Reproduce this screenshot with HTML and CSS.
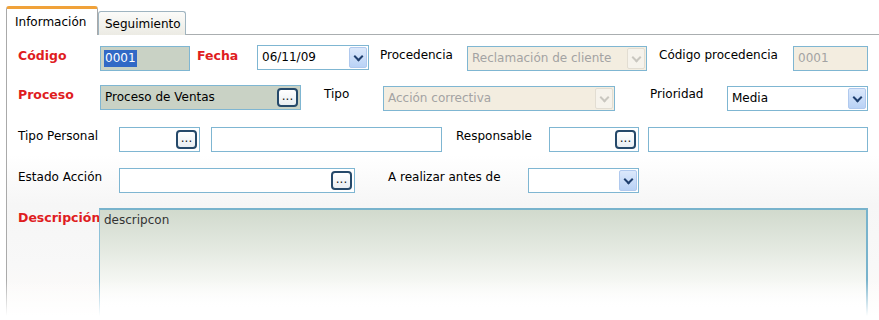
FILE: index.html
```html
<!DOCTYPE html>
<html lang="es">
<head>
	<meta charset="UTF-8">
	<title>Acción</title>
	<link rel="stylesheet" href="styles.css">
</head>
<body>
	<div id="wrap">
		<ul class="tabs">
			<li class="tab active">Información</li>
			<li class="tab">Seguimiento</li>
		</ul>
		<div class="panel">
			<div class="row">
				<span class="lbl req w-codigo">Código</span>
				<div class="field grey w-cod-in"><span class="sel">0001</span></div>
				<span class="lbl req w-fecha">Fecha</span>
				<div class="field combo w-fecha-in"><span class="val">06/11/09</span><i class="arrow"></i></div>
				<span class="lbl w-proc">Procedencia</span>
				<div class="field combo off w-proc-in"><span class="val">Reclamación de cliente</span><i class="arrow"></i></div>
				<span class="lbl w-codproc">Código procedencia</span>
				<div class="field off w-codproc-in"><span class="val">0001</span></div>
			</div>
			<div class="row">
				<span class="lbl req w-codigo">Proceso</span>
				<div class="field grey w-proceso"><span class="val">Proceso de Ventas</span><b class="dots">...</b></div>
				<span class="lbl w-tipo">Tipo</span>
				<div class="field combo off w-tipo-in"><span class="val">Acción correctiva</span><i class="arrow"></i></div>
				<span class="lbl w-prio">Prioridad</span>
				<div class="field combo w-prio-in"><span class="val">Media</span><i class="arrow"></i></div>
			</div>
			<div class="row r3">
				<span class="lbl w-tp">Tipo Personal</span>
				<div class="field w-tp-in"><b class="dots">...</b></div>
				<div class="field w-tp-desc"></div>
				<span class="lbl w-resp">Responsable</span>
				<div class="field w-resp-in"><b class="dots">...</b></div>
				<div class="field w-resp-desc"></div>
			</div>
			<div class="row r4">
				<span class="lbl w-tp">Estado Acción</span>
				<div class="field w-estado"><b class="dots">...</b></div>
				<span class="lbl w-antes">A realizar antes de</span>
				<div class="field combo w-antes-in"><i class="arrow"></i></div>
			</div>
			<div class="row r5">
				<span class="lbl req w-desc">Descripción</span>
				<div class="memo">descripcon</div>
			</div>
		</div>
	</div>
</body>
</html>
```
FILE: styles.css
```css
*{margin: 0;padding: 0;box-sizing: border-box;}
body{
	background: #fff;
	font-family: "DejaVu Sans", Verdana, sans-serif;
	font-size: 12px;
	color: #000;
	overflow: hidden;
}
#wrap{
	position: relative;
	width: 879px;
	height: 320px;
	padding-top: 6px;
}
#wrap::after{
	content: "";
	position: absolute;
	left: 0;
	right: 0;
	bottom: 0;
	height: 40px;
	background: linear-gradient(rgba(255,255,255,0), #fff 90%);
}
.tabs{
	display: flex;
	align-items: flex-end;
	padding-left: 6px;
	list-style: none;
	position: relative;
	z-index: 1;
	margin-bottom: -1px;
}
.tab{
	width: 88px;
	height: 24px;
	padding: 5px 0 0 6px;
	border: 1px solid #9fb4c0;
	border-bottom: none;
	border-radius: 3px 3px 0 0;
	background: linear-gradient(#fbfbf9, #ecebe4);
}
.tab.active{
	width: 92px;
	height: 29px;
	padding: 6px 0 0 8px;
	border: 1px solid #a9a9a9;
	border-top: 3px solid #f0a23a;
	border-bottom: none;
	border-radius: 3px 3px 0 0;
	background: #fff;
}
.panel{
	margin-left: 6px;
	height: 300px;
	border-top: 1px solid #aaaeb0;
	border-left: 1px solid #aaaaaa;
	padding: 11px 0 0 11px;
	background: linear-gradient(#fff 0, #fff 120px, #f6f6f6 170px, #f8f8f8 230px, #fdfbf9 270px);
}
.row{
	display: flex;
	align-items: flex-start;
}
.row + .row{margin-top: 14px;}
.row.r3{margin-top: 16px;}
.row.r4{margin-top: 16px;}
.row.r5{margin-top: 15px;}
.lbl{
	flex: none;
	padding-top: 2px;
	white-space: nowrap;
}
.req{
	color: #df1d1f;
	font-weight: bold;
	font-size: 12.5px;
	padding-top: 2px;
}
.field{
	flex: none;
	position: relative;
	height: 25px;
	border: 1px solid #7fb6d2;
	background: #fff;
	padding: 4px 0 0 4px;
	white-space: nowrap;
	overflow: hidden;
}
.field.grey{background: #c9d2c5;}
.field.off{background: #f3ede0;color: #a3a3a3;}
.sel{
	background: #3169c6;
	color: #fff;
	padding: 1px 1px 2px;
	margin-left: -1px;
}
.combo .arrow{
	position: absolute;
	right: 1px;
	top: 1px;
	width: 18px;
	height: 21px;
	border: 1px solid #b0c9ee;
	border-radius: 2px;
	background: linear-gradient(#dbe8fb, #b9d2f6);
}
.combo .arrow::after{
	content: "";
	position: absolute;
	left: 5px;
	top: 5px;
	width: 5px;
	height: 5px;
	border-right: 2px solid #1f3f6e;
	border-bottom: 2px solid #1f3f6e;
	transform: rotate(45deg);
}
.combo.off .arrow{
	border-color: #e2ddd2;
	background: #f6f3ec;
}
.combo.off .arrow::after{border-color: #c9c7c0;}
.dots{
	position: absolute;
	right: 2px;
	top: 2px;
	width: 21px;
	height: 19px;
	border: 2px solid #25496a;
	border-radius: 4px;
	background: linear-gradient(#fff, #e9eef2);
	font-weight: normal;
	font-size: 12px;
	line-height: 13px;
	text-align: center;
	color: #222;
}
.memo{
	flex: none;
	width: 769px;
	height: 120px;
	border-top: 2px solid #78b3cc;
	border-left: 1px solid #8dc1d8;
	border-right: 2px solid #78b3cc;
	padding: 3px 0 0 4px;
	color: #333;
	background: linear-gradient(#d1dacd, #e5eae2 35%, #f5f7f3 60%, #fff 82%);
}

.w-codigo{width: 82px;}
.w-cod-in{width: 90px;}
.w-fecha{width: 67px;padding-left: 7px;}
.w-fecha-in{width: 112px;margin-top: -1px;}
.w-proc{width: 98px;padding-left: 11px;}
.w-proc-in{width: 180px;}
.w-codproc{width: 146px;padding-left: 12px;}
.w-codproc-in{width: 75px;}
.w-proceso{width: 201px;}
.w-tipo{width: 82px;padding-left: 23px;}
.w-tipo-in{width: 232px;margin-top: 1px;}
.w-prio{width: 112px;padding-left: 35px;}
.w-prio-in{width: 141px;margin-top: 1px;}
.w-tp{width: 101px;}
.w-tp-in{width: 81px;}
.w-tp-desc{width: 231px;margin-left: 11px;}
.w-resp{width: 107px;padding-left: 14px;}
.w-resp-in{width: 90px;}
.w-resp-desc{width: 220px;margin-left: 9px;}
.w-estado{width: 236px;}
.w-antes{width: 173px;padding-left: 33px;}
.w-antes-in{width: 111px;}
.w-desc{width: 81px;}
```
